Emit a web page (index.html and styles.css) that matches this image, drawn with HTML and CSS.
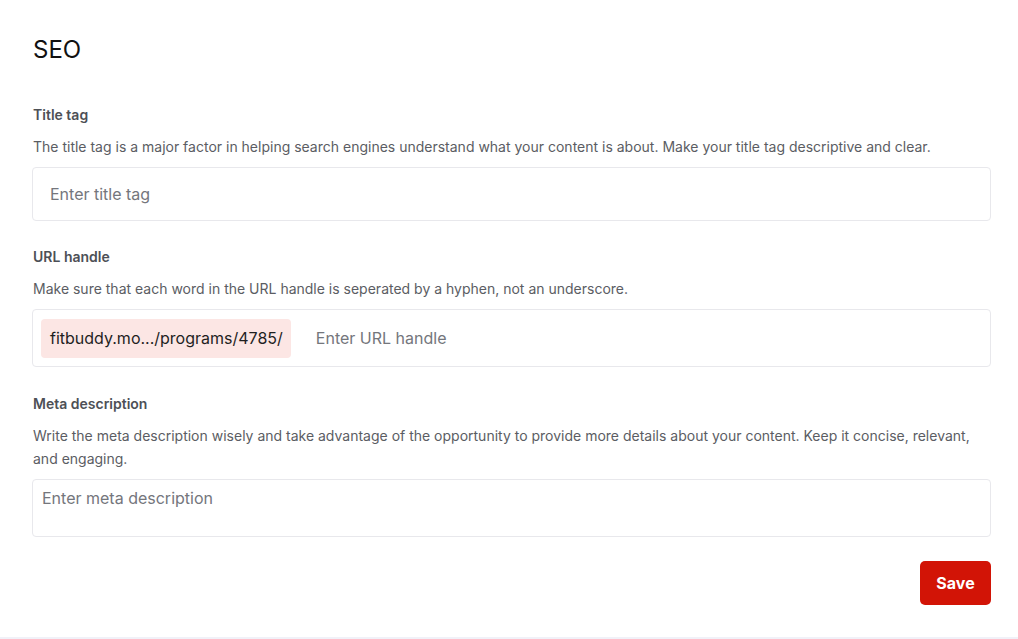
FILE: index.html
```html
<!DOCTYPE html>
<html lang="en">
<head>
<meta charset="utf-8">
<title>SEO</title>
<link rel="stylesheet" href="styles.css">
</head>
<body>
<main class="card">
  <h1 class="title">SEO</h1>

  <section class="field field-first">
    <label class="label" for="title-tag">Title tag</label>
    <p class="help">The title tag is a major factor in helping search engines understand what your content is about. Make your title tag descriptive and clear.</p>
    <input id="title-tag" class="input" type="text" placeholder="Enter title tag">
  </section>

  <section class="field">
    <label class="label" for="url-handle">URL handle</label>
    <p class="help">Make sure that each word in the URL handle is seperated by a hyphen, not an underscore.</p>
    <div class="url-box">
      <span class="prefix">fitbuddy.mo.../programs/4785/</span>
      <input id="url-handle" class="url-input" type="text" placeholder="Enter URL handle">
    </div>
  </section>

  <section class="field field-meta">
    <label class="label" for="meta-desc">Meta description</label>
    <p class="help">Write the meta description wisely and take advantage of the opportunity to provide more details about your content. Keep it concise, relevant, and engaging.</p>
    <textarea id="meta-desc" class="textarea" placeholder="Enter meta description"></textarea>
  </section>

  <div class="actions">
    <button class="save" type="button">Save</button>
  </div>
</main>
</body>
</html>
```

FILE: styles.css
```css
* { box-sizing: border-box; }

html, body {
  margin: 0;
  padding: 0;
}

body {
  background: #f1f1f8;
  font-family: Inter, "Noto Sans", sans-serif;
  color: #111;
  min-height: 639px;
}

.card {
  background: #ffffff;
  padding: 35px 27px 32px 32px;
  display: flex;
  flex-direction: column;
}

.title {
  margin: 0;
  font-size: 24px;
  line-height: 29px;
  font-weight: 400;
  color: #111111;
  padding-left: 1px;
}

.field {
  display: flex;
  flex-direction: column;
  margin-top: 26px;
}

.field-first {
  margin-top: 41px;
}

.field-meta {
  margin-top: 27px;
}

.label {
  font-size: 14px;
  line-height: 20px;
  font-weight: 600;
  color: #4d5056;
  padding-left: 1px;
}

.help {
  margin: 10px 0 9px;
  font-size: 14px;
  line-height: 23px;
  color: #5b5d63;
  padding-left: 1px;
}

.input {
  height: 54px;
  border: 1px solid #e8e8ec;
  border-radius: 4px;
  padding: 0 16px 0 17px;
  font-family: inherit;
  font-size: 16px;
  color: #222;
  background: #fff;
  outline: none;
}

.input::placeholder,
.url-input::placeholder,
.textarea::placeholder {
  color: #74767c;
  opacity: 1;
}

.url-box {
  height: 58px;
  border: 1px solid #e8e8ec;
  border-radius: 4px;
  padding: 8px;
  display: flex;
  align-items: center;
}

.prefix {
  height: 39px;
  display: flex;
  align-items: center;
  padding: 0 8px 0 9px;
  background: #fce6e4;
  border-radius: 4px;
  font-size: 16px;
  color: #1f1f1f;
  white-space: nowrap;
}

.url-input {
  flex: 1;
  min-width: 0;
  margin-left: 25px;
  border: none;
  outline: none;
  padding: 0;
  font-family: inherit;
  font-size: 16px;
  color: #222;
  background: transparent;
}

.textarea {
  height: 58px;
  border: 1px solid #e8e8ec;
  border-radius: 4px;
  padding: 6px 9px;
  font-family: inherit;
  font-size: 16px;
  line-height: 24px;
  color: #222;
  resize: none;
  outline: none;
  display: block;
}

.actions {
  display: flex;
  justify-content: flex-end;
  margin-top: 24px;
}

.save {
  width: 71px;
  height: 44px;
  border: none;
  border-radius: 5px;
  background: #d21406;
  color: #ffffff;
  font-family: inherit;
  font-size: 16px;
  font-weight: 700;
  cursor: pointer;
}
```
